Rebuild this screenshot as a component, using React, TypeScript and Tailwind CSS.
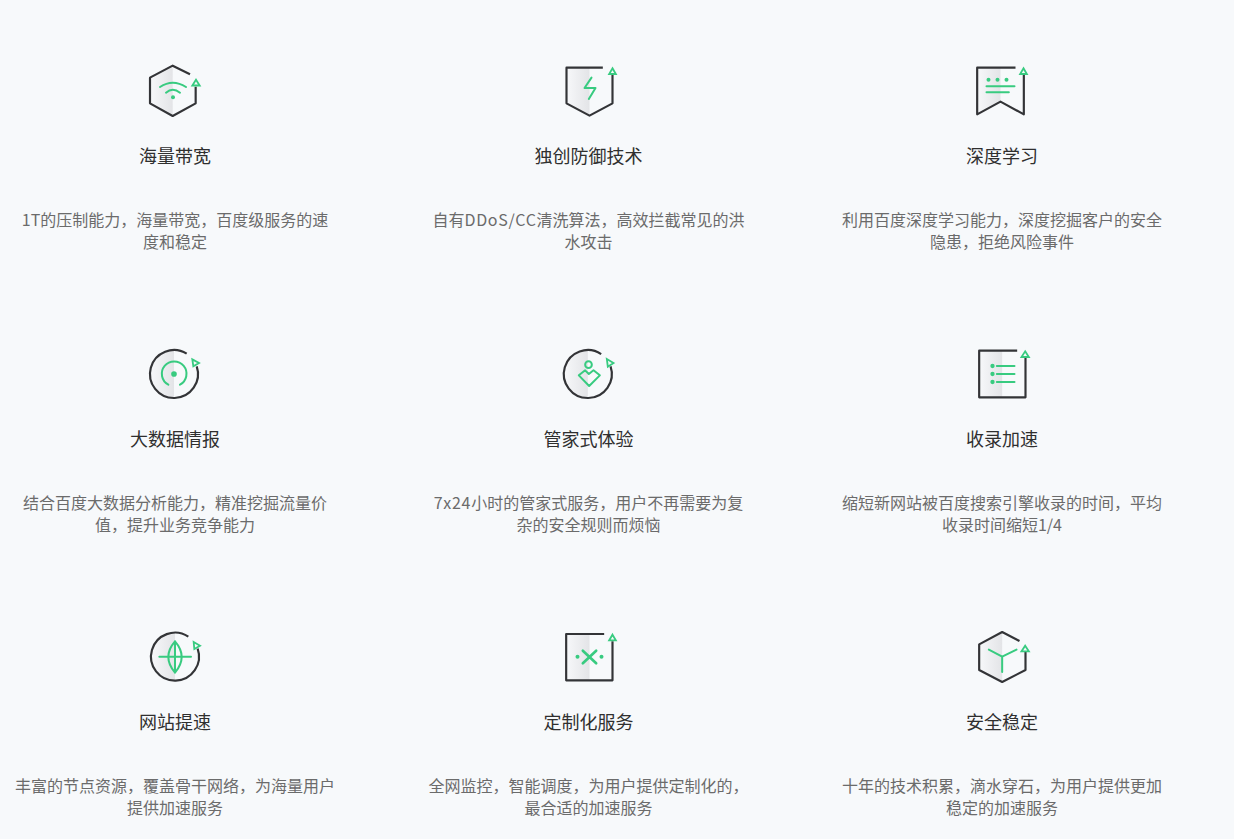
import React from "react";

const DARK = "#333437";
const GREEN = "#38cb80";

type Shape = {
  fill: string;
  dark: string;
  tri: string;
  green: React.ReactNode;
};

const Dot = ({ x, y, r = 6 }: { x: number; y: number; r?: number }) => (
  <circle cx={x} cy={y} r={r} fill={GREEN} stroke="none" />
);

const shapes: Shape[] = [
  {
    fill: "M128 32L60 68V145L128 183Z",
    dark: "M180 58L128 32L60 68V145L128 183L197 145V95",
    tri: "M198 74L209 91.5H187Z",
    green: (
      <>
        <path d="M90 96Q128 70 168 96" />
        <path d="M108 113Q128 96 150 113" />
        <Dot x={129} y={127} />
      </>
    ),
  },
  {
    fill: "M63 38H132V182L63 145Z",
    dark: "M172 38H63V145L132 182L201 145V60",
    tri: "M201 40L211 57H191Z",
    green: <path d="M138 68L117 99H150L130 132" />,
  },
  {
    fill: "M65 38H135V140L65 178Z",
    dark: "M180 38H65V178L135 140L205 178V60",
    tri: "M204 40L214 57H194Z",
    green: (
      <>
        <Dot x={99} y={74} />
        <Dot x={126} y={74} />
        <Dot x={153} y={74} />
        <path d="M93 94H177M93 112H160" />
      </>
    ),
  },
  {
    fill: "M132 36A72 72 0 0 0 132 180Z",
    dark: "M170 46.8A72 72 0 1 0 200.2 85",
    tri: "M187 64L207 75L190 85Z",
    green: (
      <>
        <path d="M115 140A37 37 0 1 1 150 140" />
        <Dot x={132} y={108} r={8.5} />
      </>
    ),
  },
  {
    fill: "M127 36A72 72 0 0 0 127 180Z",
    dark: "M167 48.1A72 72 0 1 0 195.2 85",
    tri: "M184 63L204 75L187 86Z",
    green: (
      <>
        <circle cx={129} cy={80} r={10} />
        <path d="M100 112L119 97L130 108L144 97L163 112L131 144Z" />
      </>
    ),
  },
  {
    fill: "M71 38H140V178H71Z",
    dark: "M185 38H71V178H210V60",
    tri: "M209 40L220 57H198Z",
    green: (
      <>
        <Dot x={111} y={84} r={6.5} />
        <Dot x={111} y={108} r={6.5} />
        <Dot x={111} y={132} r={6.5} />
        <path d="M124 84H177M124 108H177M124 132H177" />
      </>
    ),
  },
  {
    fill: "M135 32A72 72 0 0 0 135 176Z",
    dark: "M175 44.1A72 72 0 1 0 202.9 80",
    tri: "M191 60L210 71L193 81Z",
    green: <path d="M135 58Q175 104 135 152Q95 104 135 58ZM135 58V152M88 104H183" />,
  },
  {
    fill: "M62 36H132V175H62Z",
    dark: "M176 36H62V175H201V58",
    tri: "M201 38L211 55H191Z",
    green: (
      <>
        <path d="M112 86L152 124M152 86L112 124" strokeWidth={8} />
        <Dot x={96} y={104} />
        <Dot x={168} y={104} />
      </>
    ),
  },
  {
    fill: "M140 30L71 67V144L140 180Z",
    dark: "M192 57L140 30L71 67V144L140 180L210 144V90",
    tri: "M209 71L220 88H198Z",
    green: <path d="M100 83L140 104L183 83M140 104V150" />,
  },
];

const viewBoxes = [
  "0 0 270 210",
  "-4.5 0 270 210",
  "4.5 0 270 210",
  "0 0 270 210",
  "-4.5 0 270 210",
  "4.5 0 270 210",
  "0 -3 270 210",
  "-4.5 -3 270 210",
  "4.5 -3 270 210",
];

const Icon = ({ i }: { i: number }) => {
  const s = shapes[i];
  return (
    <svg width={90} height={70} viewBox={viewBoxes[i]} fill="none" className="block">
      <defs>
        <linearGradient id={`g${i}`} gradientUnits="objectBoundingBox" x1="0" x2="1" y1="0" y2="0">
          <stop offset="0" stopColor="#f7f8fa" />
          <stop offset="1" stopColor="#e3e4e7" />
        </linearGradient>
      </defs>
      <path d={s.fill} fill={`url(#g${i})`} />
      <path d={s.dark} stroke={DARK} strokeWidth={6.5} strokeLinejoin="round" />
      <path d={s.tri} stroke={GREEN} strokeWidth={5.5} strokeLinejoin="miter" />
      <g stroke={GREEN} strokeWidth={6} strokeLinecap="round" strokeLinejoin="round">
        {s.green}
      </g>
    </svg>
  );
};

const items = [
  ["海量带宽", "1T的压制能力，海量带宽，百度级服务的速度和稳定"],
  ["独创防御技术", "自有DDoS/CC清洗算法，高效拦截常见的洪水攻击"],
  ["深度学习", "利用百度深度学习能力，深度挖掘客户的安全隐患，拒绝风险事件"],
  ["大数据情报", "结合百度大数据分析能力，精准挖掘流量价值，提升业务竞争能力"],
  ["管家式体验", "7x24小时的管家式服务，用户不再需要为复杂的安全规则而烦恼"],
  ["收录加速", "缩短新网站被百度搜索引擎收录的时间，平均收录时间缩短1/4"],
  ["网站提速", "丰富的节点资源，覆盖骨干网络，为海量用户提供加速服务"],
  ["定制化服务", "全网监控，智能调度，为用户提供定制化的，最合适的加速服务"],
  ["安全稳定", "十年的技术积累，滴水穿石，为用户提供更加稳定的加速服务"],
];

const Desc = ({ text }: { text: string }) => (
  <>
    {text.split(/(DDoS\/CC|7x24)/).map((part, i) =>
      i % 2 === 1 ? (
        <span key={i} className="tracking-[0.7px]">
          {part}
        </span>
      ) : (
        part
      ),
    )}
  </>
);

export default function App() {
  return (
    <div className="h-[839px] overflow-hidden bg-[#f7f9fb] pt-[55px] pl-[15px] font-['Noto_Sans_CJK_SC','Noto_Sans',sans-serif]">
      <div className="grid grid-cols-[320px_320px_320px] gap-x-[93.5px] gap-y-[86px]">
        {items.map(([title, desc], i) => (
          <div key={title} className="flex flex-col items-center text-center">
            <Icon i={i} />
            <h3 className="mt-[18px] text-[18px] leading-[24px] font-normal text-[#2f2f2f]">{title}</h3>
            <p className="mt-[41px] h-[44px] text-[16px] leading-[22px] text-[#6b6b6b]">
              <Desc text={desc} />
            </p>
          </div>
        ))}
      </div>
    </div>
  );
}
